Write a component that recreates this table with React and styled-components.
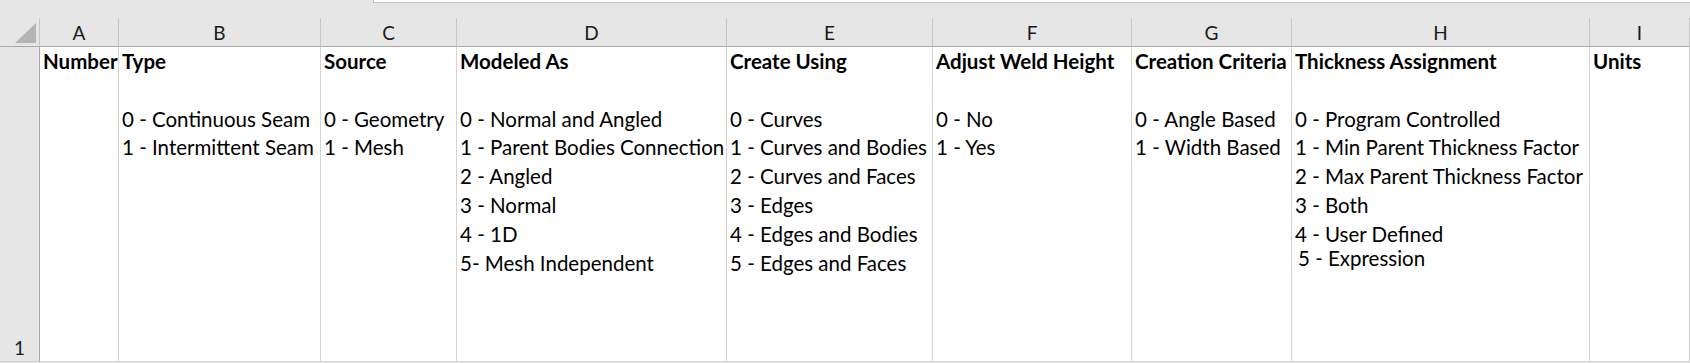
import React from "react";
import styled, { createGlobalStyle } from "styled-components";

const GlobalStyle = createGlobalStyle`
  html, body { margin: 0; padding: 0; background: #e6e6e6; }
  body { font-family: "Lato", "Liberation Sans", sans-serif; }
`;

const COLS = [40, 79, 202, 136, 270, 206, 199, 160, 298, 100];

const Sheet = styled.div`
  width: 1690px;
  height: 363px;
  background: #e6e6e6;
  display: flex;
  flex-direction: column;
  overflow: hidden;
`;

const TopStrip = styled.div`
  height: 18px;
  display: flex;
  align-items: flex-start;
`;

const FormulaEdge = styled.div`
  margin-left: 373px;
  flex: 1;
  height: 2px;
  background: #ffffff;
  border-left: 1px solid #c3c3c3;
  border-bottom: 1px solid #c3c3c3;
`;

const Grid = styled.div`
  display: grid;
  grid-template-columns: ${COLS.map((c) => c + "px").join(" ")};
  grid-template-rows: 29px 315px;
`;

const Corner = styled.div`
  box-sizing: border-box;
  border-right: 1px solid #c6c6c6;
  border-bottom: 1px solid #a9a9a9;
  position: relative;
`;

const SelectAll = styled.div`
  position: absolute;
  left: 15px;
  top: 5px;
  width: 0;
  height: 0;
  border-style: solid;
  border-width: 0 0 20px 21px;
  border-color: transparent transparent #b5b5b5 transparent;
`;

const ColHead = styled.div`
  box-sizing: border-box;
  border-right: 1px solid #c6c6c6;
  border-bottom: 1px solid #a9a9a9;
  text-align: center;
  font-size: 19px;
  line-height: 28px;
  padding-top: 1px;
  color: #1a1a1a;
`;

const RowHead = styled.div`
  box-sizing: border-box;
  border-right: 1px solid #a9a9a9;
  border-bottom: 1px solid #d0d0d0;
  display: flex;
  align-items: flex-end;
  justify-content: center;
  font-size: 19px;
  line-height: 22px;
  padding-bottom: 2px;
  color: #1a1a1a;
`;

const Cell = styled.div`
  box-sizing: border-box;
  background: #ffffff;
  border-right: 1px solid #d4d4d4;
  border-bottom: 1px solid #d4d4d4;
  padding: 0 0 0 3px;
  font-size: 20.5px;
  line-height: 28.8px;
  color: #000;
  white-space: nowrap;
  display: flex;
  flex-direction: column;
`;

const Title = styled.div`
  font-weight: 700;
  margin-bottom: 28.8px;
`;

const Item = styled.div`
  margin-left: ${(p) => (p.$shifted ? "3px" : "0")};
  margin-top: ${(p) => (p.$shifted ? "-4.3px" : "0")};
`;

const columns = [
  { letter: "A", title: "Number", items: [] },
  { letter: "B", title: "Type", items: ["0 - Continuous Seam", "1 - Intermittent Seam"] },
  { letter: "C", title: "Source", items: ["0 - Geometry", "1 - Mesh"] },
  {
    letter: "D",
    title: "Modeled As",
    items: [
      "0 - Normal and Angled",
      "1 - Parent Bodies Connection",
      "2 - Angled",
      "3 - Normal",
      "4 - 1D",
      "5- Mesh Independent",
    ],
  },
  {
    letter: "E",
    title: "Create Using",
    items: [
      "0 - Curves",
      "1 - Curves and Bodies",
      "2 - Curves and Faces",
      "3 - Edges",
      "4 - Edges and Bodies",
      "5 - Edges and Faces",
    ],
  },
  { letter: "F", title: "Adjust Weld Height", items: ["0 - No", "1 - Yes"] },
  { letter: "G", title: "Creation Criteria", items: ["0 - Angle Based", "1 - Width Based"] },
  {
    letter: "H",
    title: "Thickness Assignment",
    items: [
      "0 - Program Controlled",
      "1 - Min Parent Thickness Factor",
      "2 - Max Parent Thickness Factor",
      "3 - Both",
      "4 - User Defined",
      { text: "5 - Expression", shifted: true },
    ],
  },
  { letter: "I", title: "Units", items: [] },
];

export default function App() {
  return (
    <Sheet>
      <GlobalStyle />
      <TopStrip>
        <FormulaEdge />
      </TopStrip>
      <Grid>
        <Corner>
          <SelectAll />
        </Corner>
        {columns.map((c) => (
          <ColHead key={c.letter}>{c.letter}</ColHead>
        ))}
        <RowHead>1</RowHead>
        {columns.map((c) => (
          <Cell key={c.letter}>
            <Title>{c.title}</Title>
            {c.items.map((it, i) =>
              typeof it === "string" ? (
                <Item key={i}>{it}</Item>
              ) : (
                <Item key={i} $shifted={it.shifted}>
                  {it.text}
                </Item>
              )
            )}
          </Cell>
        ))}
      </Grid>
    </Sheet>
  );
}
